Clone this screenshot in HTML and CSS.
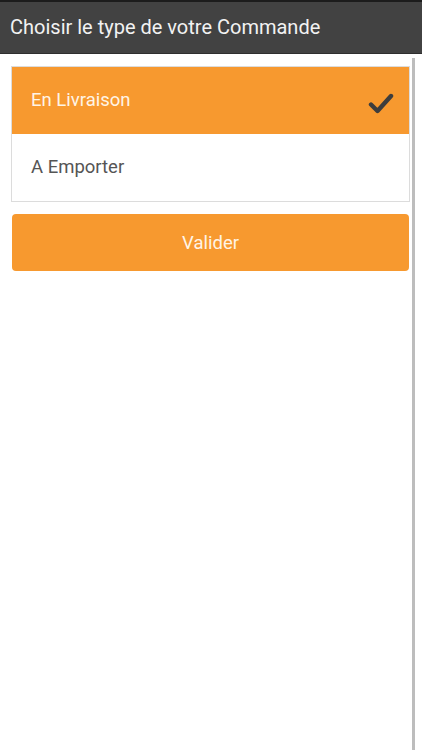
FILE: index.html
```html
<!DOCTYPE html>
<html lang="fr">
<head>
<meta charset="utf-8">
<title>Type de commande</title>
<link rel="stylesheet" href="styles.css">
</head>
<body>
<header class="topbar">
  <h1 class="title">Choisir le type de votre Commande</h1>
</header>
<div class="screen">
  <main class="content">
    <ul class="options">
      <li class="option option--selected">
        <span class="option-label">En Livraison</span>
        <svg class="check" width="26" height="22" viewBox="0 0 26 22" aria-hidden="true">
          <path d="M3 12.5 L9.5 19 L23 4" fill="none" stroke="#3d3d3d" stroke-width="4.4" stroke-linecap="round" stroke-linejoin="round"/>
        </svg>
      </li>
      <li class="option">
        <span class="option-label">A Emporter</span>
      </li>
    </ul>
    <button class="validate" type="button">Valider</button>
  </main>
  <div class="scrollbar"></div>
</div>
</body>
</html>
```
FILE: styles.css
```css
* { box-sizing: border-box; }
html, body { margin: 0; padding: 0; height: 100%; }
body {
  font-family: Roboto, "Noto Sans", "Liberation Sans", sans-serif;
  background: #ffffff;
  display: flex;
  flex-direction: column;
  width: 422px;
  height: 750px;
  overflow: hidden;
}
.topbar {
  height: 54px;
  background: #424242;
  border-top: 2px solid #1c1c1c;
  border-bottom: 1px solid #2e2e2e;
  display: flex;
  align-items: center;
  padding: 0 0 2px 10px;
  flex: none;
}
.title {
  margin: 0;
  font-weight: 400;
  font-size: 20px;
  color: #f2f2f2;
}
.screen {
  flex: 1;
  display: flex;
  padding-top: 4px;
}
.content {
  width: 412px;
  padding: 8px 2px 0 11px;
}
.options {
  list-style: none;
  margin: 0;
  padding: 0;
  border: 1px solid #dcdcdc;
}
.option {
  height: 67px;
  display: flex;
  align-items: center;
  justify-content: space-between;
  padding: 0 15px 0 19px;
  font-size: 18.5px;
  color: #555555;
  background: #ffffff;
}
.option--selected {
  background: #f7992f;
  color: #fff4e6;
}
.option-label { padding-bottom: 1px; }
.check { margin-top: 4px; }
.validate {
  display: block;
  width: 397px;
  height: 57px;
  margin: 12px 0 0 1px;
  border: none;
  border-radius: 4px;
  background: #f7992f;
  color: #fff4e6;
  font-family: inherit;
  font-size: 18.5px;
  padding: 0;
}
.scrollbar {
  width: 3px;
  background: #bdbdbd;
  flex: none;
}
```
